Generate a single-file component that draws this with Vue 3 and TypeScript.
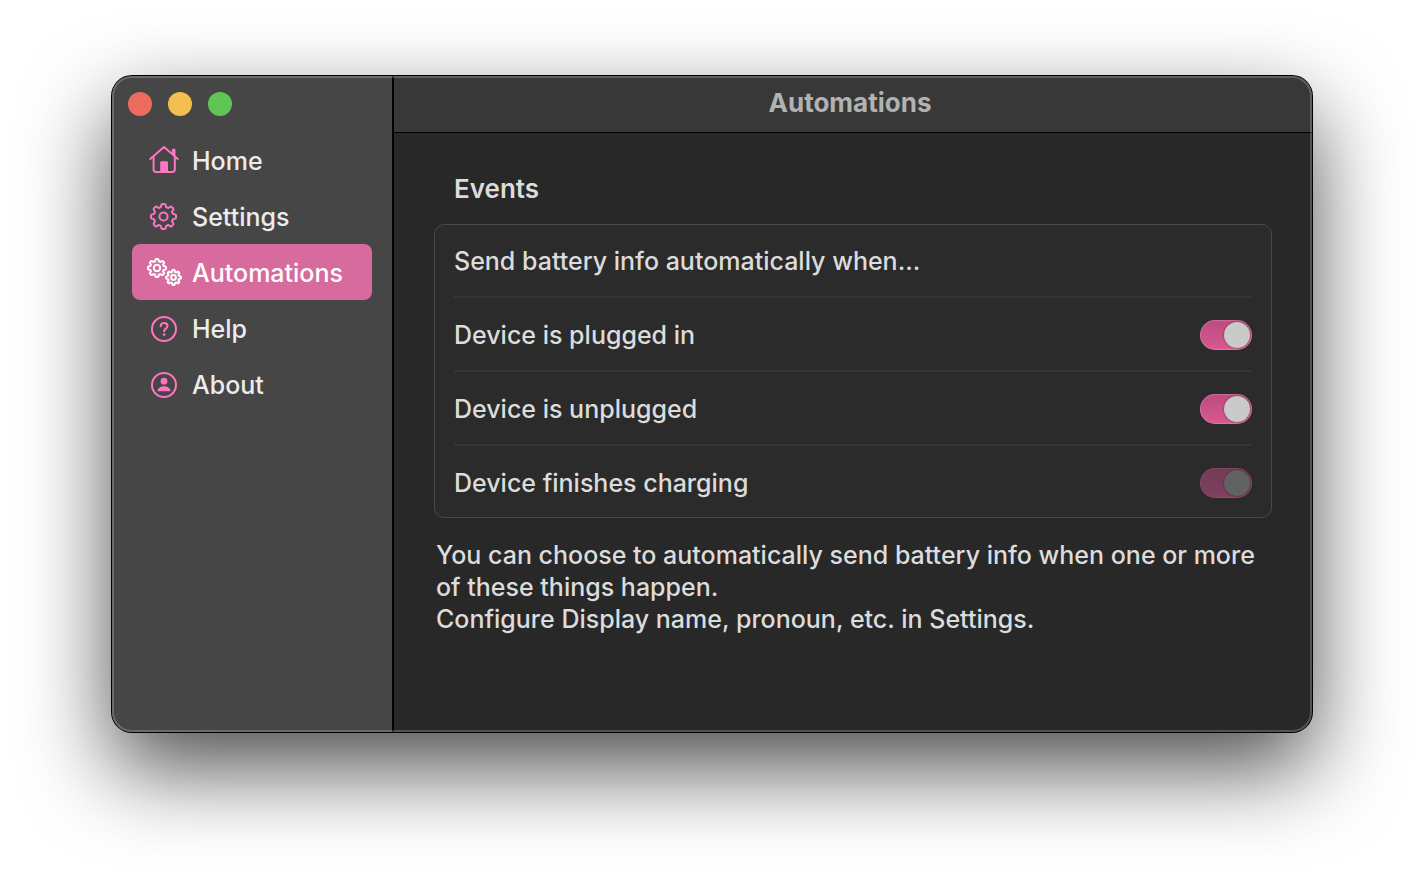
<script setup lang="ts">
import { ref } from 'vue'

type IconName = 'home' | 'settings' | 'automations' | 'help' | 'about'

interface NavItem {
  icon: IconName
  label: string
}

interface EventToggle {
  id: string
  label: string
  on: boolean
  disabled: boolean
}

const items: NavItem[] = [
  { icon: 'home', label: 'Home' },
  { icon: 'settings', label: 'Settings' },
  { icon: 'automations', label: 'Automations' },
  { icon: 'help', label: 'Help' },
  { icon: 'about', label: 'About' },
]

const current = ref<IconName>('automations')

const events = ref<EventToggle[]>([
  { id: 'plugged', label: 'Device is plugged in', on: true, disabled: false },
  { id: 'unplugged', label: 'Device is unplugged', on: true, disabled: false },
  { id: 'charged', label: 'Device finishes charging', on: true, disabled: true },
])

// Outline of an eight-toothed cog with rounded valleys.
function gear(cx: number, cy: number, outer: number, inner: number): string {
  const point = (radius: number, degrees: number): string => {
    const a = (degrees * Math.PI) / 180
    return `${(cx + radius * Math.sin(a)).toFixed(2)} ${(cy - radius * Math.cos(a)).toFixed(2)}`
  }
  const mid = (outer + inner) / 2
  let d = ''
  for (let i = 0; i < 8; i++) {
    const t = i * 45
    d += `${i === 0 ? 'M' : 'L'}${point(mid, t - 12)}`
    d += `Q${point(outer, t - 10)} ${point(outer, t - 5)}`
    d += `L${point(outer, t + 5)}`
    d += `Q${point(outer, t + 10)} ${point(mid, t + 12)}`
    d += `Q${point(inner - 0.6, t + 15)} ${point(inner, t + 22.5)}`
    d += `Q${point(inner - 0.6, t + 30)} ${point(mid, t + 33)}`
  }
  return d + 'Z'
}

const largeGear = gear(17.5, 16.5, 12.6, 9.8)
const leftGear = gear(11, 12, 9, 7)
const rightGear = gear(27.5, 21.5, 7.5, 5.7)
</script>

<template>
  <div class="desktop">
    <div class="window">
      <aside class="sidebar">
        <div class="lights">
          <button class="light close" type="button" aria-label="Close"></button>
          <button class="light minimize" type="button" aria-label="Minimize"></button>
          <button class="light zoom" type="button" aria-label="Zoom"></button>
        </div>
        <nav class="nav">
          <button
            v-for="item in items"
            :key="item.icon"
            type="button"
            class="nav-item"
            :class="{ active: item.icon === current }"
            @click="current = item.icon"
          >
            <svg class="icon" viewBox="0 0 36 32" aria-hidden="true">
              <g v-if="item.icon === 'home'">
                <path d="M4.2 15L18 3L31.8 15" />
                <path d="M7.6 13V25.6Q7.6 28 10 28H26.4Q28.8 28 28.8 25.6V13" />
                <path class="solid" d="M14.2 28V18.6Q14.2 17.2 15.6 17.2H20.6Q22 17.2 22 18.6V28Z" />
                <path class="solid" d="M25.8 9.8V6Q25.8 4.8 27 4.8H28.3Q29.5 4.8 29.5 6V13Z" />
              </g>
              <g v-else-if="item.icon === 'settings'">
                <path :d="largeGear" />
                <circle cx="17.5" cy="16.5" r="4.1" />
              </g>
              <g v-else-if="item.icon === 'automations'">
                <path :d="leftGear" />
                <circle cx="11" cy="12" r="3.2" />
                <path :d="rightGear" />
                <circle cx="27.5" cy="21.5" r="2.4" />
              </g>
              <g v-else-if="item.icon === 'help'">
                <circle cx="18" cy="17" r="12" />
                <path d="M14.7 14.2C14.8 12.1 16.2 11 18.1 11C20 11 21.5 12.2 21.5 14C21.5 16.7 18.1 16.6 18.1 19.3" />
                <circle class="solid" cx="18.1" cy="22.6" r="1.4" />
              </g>
              <g v-else>
                <circle cx="18" cy="17" r="12" />
                <circle class="solid" cx="18" cy="13.2" r="3.4" />
                <path class="solid" d="M11.5 23.2C11.5 20.5 14.2 18.3 18 18.3C21.8 18.3 24.5 20.5 24.5 23.2Z" />
              </g>
            </svg>
            <span>{{ item.label }}</span>
          </button>
        </nav>
      </aside>
      <section class="main">
        <header class="titlebar">
          <h1>Automations</h1>
        </header>
        <main class="content">
          <h2>Events</h2>
          <div class="card">
            <div class="row">Send battery info automatically when...</div>
            <div v-for="event in events" :key="event.id" class="row">
              <label :for="event.id">{{ event.label }}</label>
              <input
                :id="event.id"
                v-model="event.on"
                class="switch"
                type="checkbox"
                role="switch"
                :disabled="event.disabled"
              />
            </div>
          </div>
          <p class="note">
            You can choose to automatically send battery info when one or more of these things happen.<br />
            Configure Display name, pronoun, etc. in Settings.
          </p>
        </main>
      </section>
    </div>
  </div>
</template>

<style>
body {
  background: #ffffff;
}
</style>

<style scoped>
.desktop {
  box-sizing: border-box;
  display: flex;
  min-height: 100vh;
  padding: 76px 112px 148px;
  overflow: hidden;
  font-family: Inter, "Liberation Sans", sans-serif;
  font-size: 25px;
  font-weight: 500;
  line-height: 32px;
  color: #dcdcdc;
}

.window {
  position: relative;
  display: flex;
  flex: 1;
  border-radius: 20px;
  background: #282828;
  box-shadow:
    0 0 0 1px #000000,
    0 36px 88px rgba(0, 0, 0, 0.7);
}

.window::after {
  content: "";
  position: absolute;
  inset: 0;
  border: 2px solid rgba(255, 255, 255, 0.2);
  border-radius: 20px;
  pointer-events: none;
}

.sidebar {
  flex: none;
  box-sizing: border-box;
  width: 282px;
  border-right: 2px solid #000000;
  border-radius: 20px 0 0 20px;
  background: #464646;
}

.lights {
  display: flex;
  align-items: center;
  gap: 16px;
  height: 56px;
  padding: 0 16px;
}

.light {
  width: 24px;
  height: 24px;
  padding: 0;
  border: 0;
  border-radius: 50%;
}

.close {
  background: #ed6a5e;
}

.minimize {
  background: #f5bf4f;
}

.zoom {
  background: #61c554;
}

.nav {
  display: flex;
  flex-direction: column;
  padding: 0 20px;
}

.nav-item {
  display: flex;
  align-items: center;
  gap: 10px;
  height: 56px;
  padding: 2px 14px 0;
  border: 0;
  border-radius: 8px;
  background: transparent;
  font: inherit;
  color: #ececec;
}

.nav-item.active {
  background: #d86b9d;
  color: #ffffff;
}

.icon {
  flex: none;
  width: 36px;
  height: 32px;
  margin-bottom: 2px;
  fill: none;
  stroke: #ff74c4;
  stroke-width: 2;
  stroke-linecap: round;
  stroke-linejoin: round;
}

.icon .solid {
  fill: #ff74c4;
  stroke: none;
}

.active .icon {
  stroke: #ffffff;
}

.active .icon .solid {
  fill: #ffffff;
}

.main {
  flex: 1;
  min-width: 0;
}

.titlebar {
  box-sizing: border-box;
  height: 57px;
  padding: 11px 6px 0 0;
  border-bottom: 1px solid #000000;
  border-radius: 0 20px 0 0;
  background: #383838;
  text-align: center;
}

h1,
h2 {
  margin: 0;
  font-size: 26px;
  font-weight: 600;
  line-height: 32px;
}

h1 {
  font-weight: 700;
  color: #b2b2b2;
}

.content {
  padding: 40px;
}

h2 {
  padding: 0 20px;
}

.card {
  margin-top: 19px;
  padding: 0 19px;
  border: 1px solid #484848;
  border-radius: 10px;
  background: #2b2b2b;
}

.row {
  box-sizing: border-box;
  display: flex;
  align-items: center;
  justify-content: space-between;
  height: 74px;
  padding-top: 2px;
  border-bottom: 2px solid #353535;
}

.row:first-child {
  height: 73px;
  padding-top: 0;
}

.row:last-child {
  height: 71px;
  border-bottom: 0;
}

.switch {
  appearance: none;
  display: flex;
  align-items: center;
  box-sizing: border-box;
  width: 52px;
  height: 30px;
  margin: 0;
  padding: 0 2px;
  border-radius: 15px;
  background: linear-gradient(#bd4b80, #d9588f);
  box-shadow: inset 0 0 1px 1px rgba(255, 255, 255, 0.2);
}

.switch::before {
  content: "";
  width: 26px;
  height: 26px;
  border-radius: 50%;
  background: #cacaca;
  box-shadow: 0 0 2px rgba(0, 0, 0, 0.5);
}

.switch:checked {
  justify-content: flex-end;
}

.switch:not(:checked) {
  background: #4a4a4a;
}

.switch:disabled {
  background: linear-gradient(#723b55, #7f4161);
  box-shadow: inset 0 0 1px 1px rgba(255, 255, 255, 0.08);
}

.switch:disabled::before {
  background: #626262;
}

.note {
  margin: 21px 0 0;
  padding: 0 2px;
}
</style>
